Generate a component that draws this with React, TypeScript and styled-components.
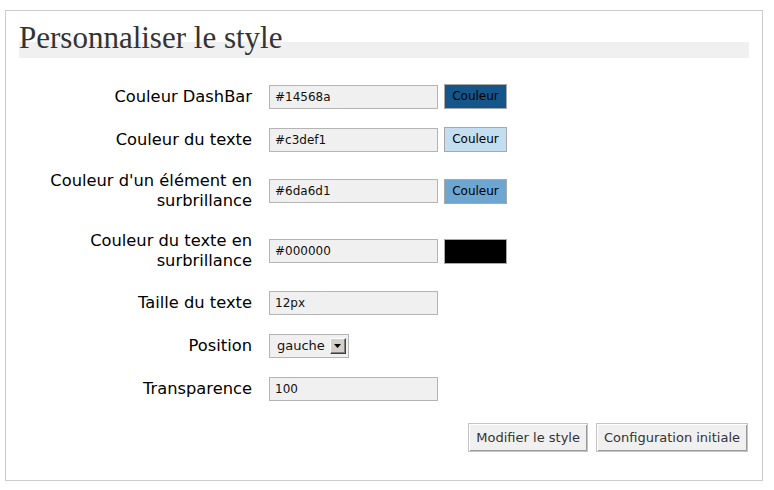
import React from "react";
import styled, { createGlobalStyle } from "styled-components";

const Global = createGlobalStyle`
  html, body { margin: 0; padding: 0; background: #fff; }
  body { font-family: "DejaVu Sans", Verdana, sans-serif; color: #000; }
`;

const Panel = styled.div`
  box-sizing: border-box;
  margin: 10px 0 0 5px;
  width: 758px;
  height: 471px;
  border: 1px solid #cccccc;
  padding: 10px 13px 0 13px;
  display: flex;
  flex-direction: column;
`;

const Title = styled.h2`
  margin: 0;
  padding: 0 0 3px 0;
  font-family: "Liberation Serif", "Times New Roman", serif;
  font-weight: normal;
  font-size: 31px;
  line-height: 34px;
  color: #333;
  background: linear-gradient(to bottom, transparent 0, transparent 21px, #f0f0f0 21px);
`;

const Form = styled.div`
  margin-top: 17px;
  display: flex;
  flex-direction: column;
`;

const Row = styled.div`
  display: flex;
  align-items: center;
  gap: 17px;
`;

const Label = styled.div`
  width: 233px;
  text-align: right;
  font-size: 16.3px;
  line-height: 20px;
  padding: 10px 0;
  color: #000;
`;

const Controls = styled.div`
  display: flex;
  align-items: center;
  gap: 6px;
  min-height: 25px;
  padding: 9px 0;
`;

const TextInput = styled.div`
  box-sizing: border-box;
  width: 169px;
  height: 24px;
  border: 1px solid #b4b4b4;
  background: #f0f0f0;
  font-size: 12px;
  line-height: 22px;
  padding-left: 5px;
  color: #111;
`;

const ColorButton = styled.div<{ $bg: string }>`
  box-sizing: border-box;
  width: 63px;
  height: 25px;
  border: 1px solid #a8a8a8;
  background: ${(p) => p.$bg};
  font-size: 12px;
  line-height: 23px;
  text-align: center;
  color: #000;
`;

const Select = styled.div`
  box-sizing: border-box;
  width: 80px;
  height: 24px;
  border: 1px solid #b4b4b4;
  background: #f0f0f0;
  display: flex;
  align-items: center;
  padding-left: 7px;
  gap: 5px;
  font-size: 13px;
  color: #111;
`;

const Arrow = styled.div`
  box-sizing: border-box;
  width: 16px;
  height: 16px;
  background: #d4d0c8;
  border-top: 1px solid #ffffff;
  border-left: 1px solid #ffffff;
  border-right: 1px solid #404040;
  border-bottom: 1px solid #404040;
  box-shadow: inset -1px -1px #808080;
  display: flex;
  align-items: center;
  justify-content: center;
`;

const Actions = styled.div`
  display: flex;
  justify-content: flex-end;
  gap: 8px;
  margin-top: 13px;
  padding-right: 1px;
`;

const ActionButton = styled.div`
  box-sizing: border-box;
  height: 29px;
  padding: 0 7px;
  border: 1px solid #c4c4c4;
  box-shadow: inset 1px 1px #ffffff, inset -1px -1px #9a9a9a;
  background: #f0f0f0;
  font-size: 13px;
  line-height: 27px;
  color: #333;
  white-space: nowrap;
`;

type Field = {
  label: React.ReactNode;
  value: string;
  color: string;
};

const colorFields: Field[] = [
  { label: "Couleur DashBar", value: "#14568a", color: "#14568a" },
  { label: "Couleur du texte", value: "#c3def1", color: "#c3def1" },
  {
    label: (
      <>
        Couleur d'un élément en
        <br />
        surbrillance
      </>
    ),
    value: "#6da6d1",
    color: "#6da6d1",
  },
  {
    label: (
      <>
        Couleur du texte en
        <br />
        surbrillance
      </>
    ),
    value: "#000000",
    color: "#000000",
  },
];

export default function App() {
  return (
    <>
      <Global />
      <Panel>
        <Title>Personnaliser le style</Title>
        <Form>
          {colorFields.map((f) => (
            <Row key={f.value}>
              <Label>{f.label}</Label>
              <Controls>
                <TextInput>{f.value}</TextInput>
                <ColorButton $bg={f.color}>Couleur</ColorButton>
              </Controls>
            </Row>
          ))}
          <Row>
            <Label>Taille du texte</Label>
            <Controls>
              <TextInput>12px</TextInput>
            </Controls>
          </Row>
          <Row>
            <Label>Position</Label>
            <Controls>
              <Select>
                gauche
                <Arrow>
                  <svg width="7" height="4" viewBox="0 0 7 4">
                    <path d="M0 0H7L3.5 4Z" fill="#000" />
                  </svg>
                </Arrow>
              </Select>
            </Controls>
          </Row>
          <Row>
            <Label>Transparence</Label>
            <Controls>
              <TextInput>100</TextInput>
            </Controls>
          </Row>
        </Form>
        <Actions>
          <ActionButton>Modifier le style</ActionButton>
          <ActionButton>Configuration initiale</ActionButton>
        </Actions>
      </Panel>
    </>
  );
}
